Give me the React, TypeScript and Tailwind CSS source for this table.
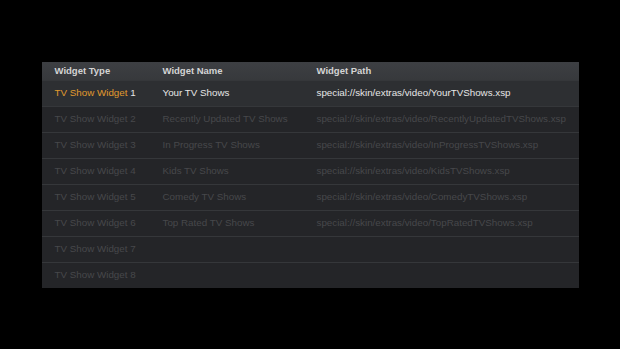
type WidgetRow = {
  type: string;
  name?: string;
  path?: string;
};

const rows: WidgetRow[] = [
  { type: "TV Show Widget 1", name: "Your TV Shows", path: "special://skin/extras/video/YourTVShows.xsp" },
  { type: "TV Show Widget 2", name: "Recently Updated TV Shows", path: "special://skin/extras/video/RecentlyUpdatedTVShows.xsp" },
  { type: "TV Show Widget 3", name: "In Progress TV Shows", path: "special://skin/extras/video/InProgressTVShows.xsp" },
  { type: "TV Show Widget 4", name: "Kids TV Shows", path: "special://skin/extras/video/KidsTVShows.xsp" },
  { type: "TV Show Widget 5", name: "Comedy TV Shows", path: "special://skin/extras/video/ComedyTVShows.xsp" },
  { type: "TV Show Widget 6", name: "Top Rated TV Shows", path: "special://skin/extras/video/TopRatedTVShows.xsp" },
  { type: "TV Show Widget 7" },
  { type: "TV Show Widget 8" },
];

// 第一行为当前焦点：类型列高亮为橙色，其余列为亮白
function Row({ row, focused }: { row: WidgetRow; focused: boolean }) {
  const [label, num] = [row.type.slice(0, -2), row.type.slice(-1)];
  return (
    <div
      className={`flex h-[26px] items-center border-t border-[#35373a] px-[13px] pt-px ${
        focused ? "bg-[#2d2f32] text-[#e6e6e6]" : "bg-[#242528] text-[#47484b]"
      }`}
    >
      <div className="w-[108px] shrink-0 whitespace-nowrap">
        <span className={focused ? "text-[#e09a2e]" : ""}>{label}</span>{" "}
        <span>{num}</span>
      </div>
      <div className="w-[154px] shrink-0 whitespace-nowrap">{row.name}</div>
      <div className="whitespace-nowrap">{row.path}</div>
    </div>
  );
}

export default function App() {
  return (
    <div className="flex h-[349px] w-[620px] items-center justify-center bg-black font-['Liberation_Sans',Arial,sans-serif] text-[9.8px]">
      <div className="w-[537px] overflow-hidden bg-[#242528]">
        <div className="flex h-[18px] items-center bg-gradient-to-b from-[#3d3f43] to-[#37393c] px-[13px] pt-px text-[9.5px] font-bold text-[#d4d4d4]">
          <div className="w-[108px] shrink-0">Widget Type</div>
          <div className="w-[154px] shrink-0">Widget Name</div>
          <div>Widget Path</div>
        </div>
        {rows.map((row, i) => (
          <Row key={row.type} row={row} focused={i === 0} />
        ))}
      </div>
    </div>
  );
}
